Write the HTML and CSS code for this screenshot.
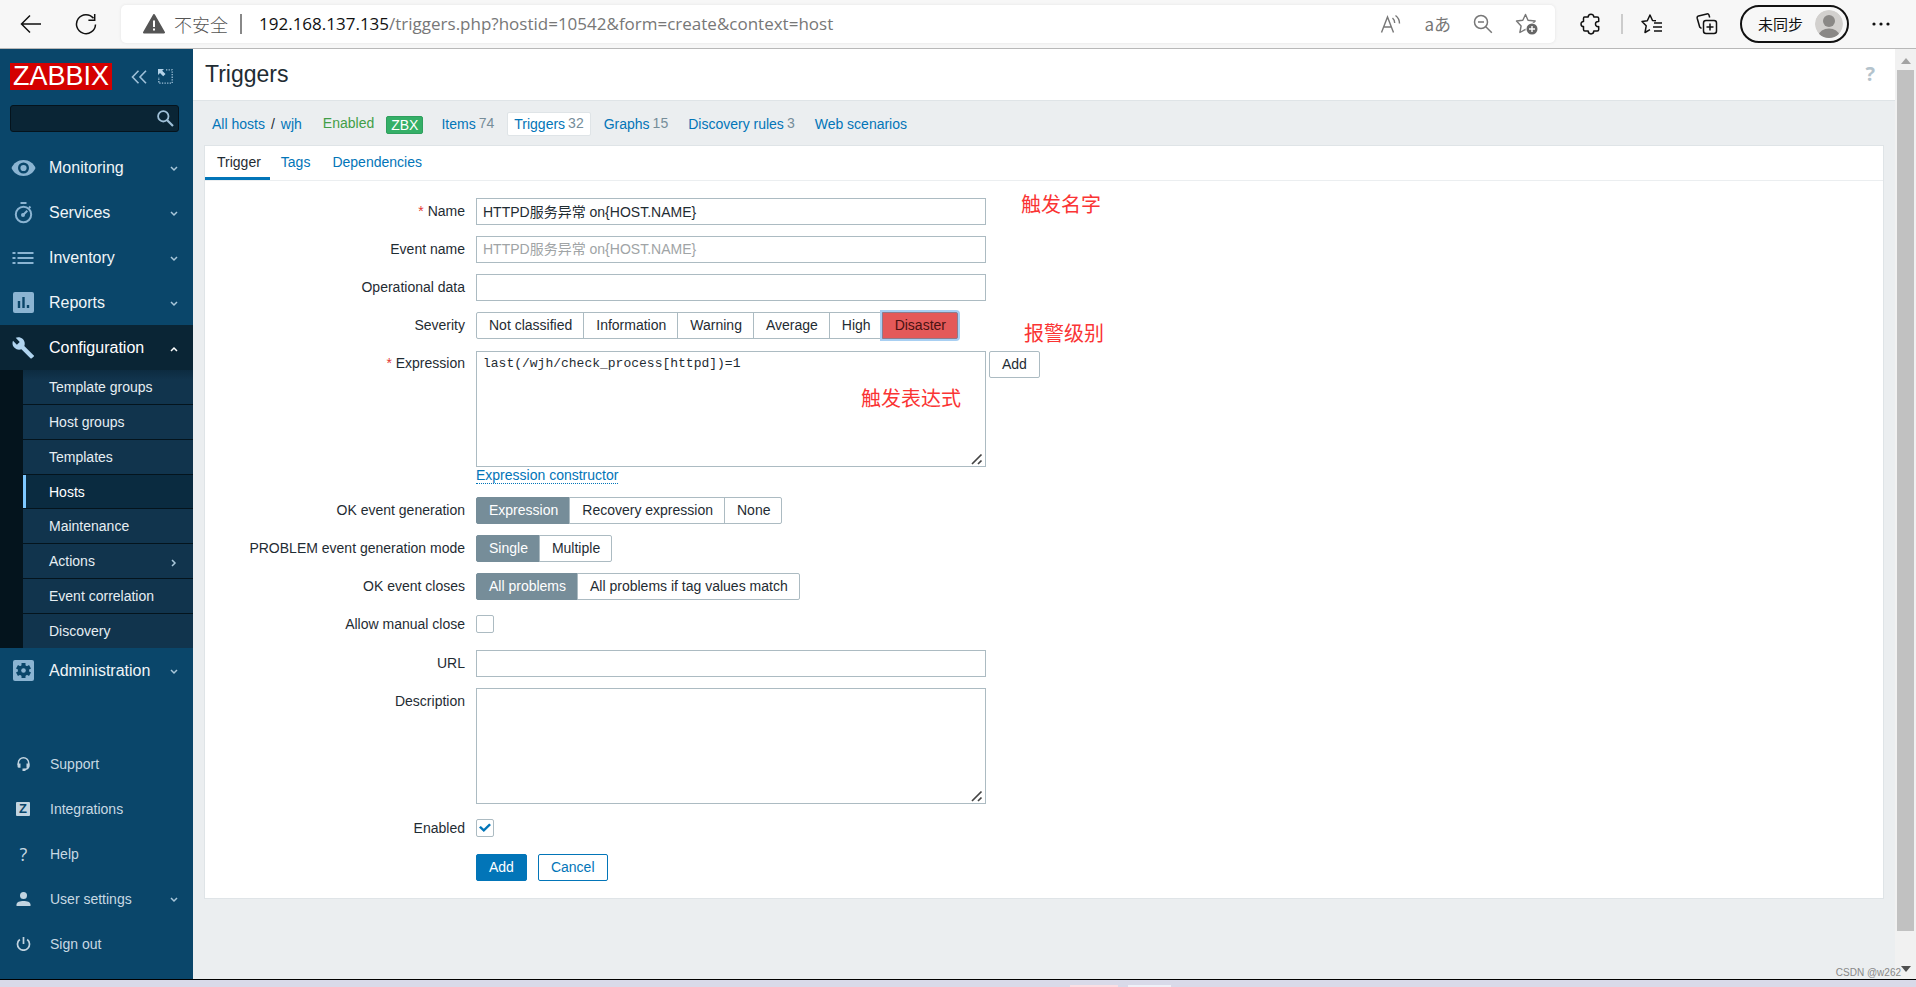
FILE: index.html
```
<!DOCTYPE html>
<html lang="en">
<head>
<meta charset="utf-8">
<title>Triggers</title>
<link rel="stylesheet" href="styles.css">
</head>
<body>
<header class="browser">
  <button class="tool" aria-label="Back"><svg width="22" height="20" viewBox="0 0 22 20"><path d="M21 10H2M10 1.500 1.500 10 10 18.500" fill="none" stroke="#111" stroke-width="1.500"/></svg></button>
  <button class="tool" aria-label="Reload"><svg width="22" height="22" viewBox="0 0 22 22"><path d="M20.500 11.500A9.500 9.500 0 1 1 18.500 5.300M19.700 1v6.300h-6.300" fill="none" stroke="#111" stroke-width="1.500"/></svg></button>
  <div class="address">
    <svg width="22" height="20" viewBox="0 0 22 20"><path d="M11 1 21 18.500H1z" fill="#555" stroke="#555" stroke-width="2" stroke-linejoin="round"/><path d="M11 6.500v6.500M11 14.500v2" stroke="#fff" stroke-width="2"/></svg>
    <span class="insecure">不安全</span>
    <span class="address-rule"></span>
    <span class="url"><b>192.168.137.135</b>/triggers.php?hostid=10542&amp;form=create&amp;context=host</span>
    <span class="address-icons">
      <button class="tool" aria-label="Read aloud"><svg width="22" height="20" viewBox="0 0 22 20" fill="none" stroke="#777" stroke-width="1.400"><path d="M1.500 18.500 7.500 3l6 15.500M3.600 13h7.800M12.500 4c1.500 1.300 2.200 3 2.200 5M15.500 1.500c2.700 2 4 4.500 4 8"/></svg></button>
      <button class="tool translate" aria-label="Translate">aあ</button>
      <button class="tool" aria-label="Zoom out"><svg width="20" height="20" viewBox="0 0 20 20" fill="none" stroke="#777" stroke-width="1.500"><circle cx="8" cy="8" r="6.500"/><path d="m12.800 12.800 6 6M5 8h6"/></svg></button>
      <button class="tool" aria-label="Add to favorites"><svg width="24" height="22" viewBox="0 0 24 22"><path d="M10.500 1.500 13 7.200l7.200.8-5.300 5 1 6.500-5.400-3.200-5.600 3.200 1.200-6.500L1.500 8l6.300-.8z" fill="none" stroke="#777" stroke-width="1.400" stroke-linejoin="round"/><circle cx="17" cy="16" r="6.500" fill="#fff"/><circle cx="17" cy="16" r="5.500" fill="#666"/><path d="M17 13v6M14 16h6" stroke="#fff" stroke-width="1.400"/></svg></button>
    </span>
  </div>
  <button class="tool puzzle" aria-label="Extensions"><svg width="22" height="22" viewBox="0 0 22 22"><path d="M4.500 4h3.700c0-3.700 5.600-3.700 5.600 0h3.400q1.500 0 1.500 1.500v3c-4.300-.700-4.300 5.800 0 5.100v3q0 1.500-1.500 1.500h-3.400c0 3.700-5.600 3.700-5.600 0H4.900q-1.400 0-1.400-1.500v-3c-3.300 0-3.300-5.200 0-5.200V5.500Q3.500 4 4.500 4z" fill="none" stroke="#111" stroke-width="1.500" stroke-linejoin="round"/></svg></button>
  <span class="tool-rule"></span>
  <button class="tool favorites" aria-label="Favorites"><svg width="22" height="20" viewBox="0 0 22 20" fill="none" stroke="#111" stroke-width="1.500" stroke-linejoin="round"><path d="M15 6.800 11.500 6.500 9 1 6.300 6.800 1 7.500l4.200 4.300L4 18.500l5-2.800"/><path d="M13 10h8M12 14h9M13 18h8" transform="translate(0 -1)"/></svg></button>
  <button class="tool collections" aria-label="Collections"><svg width="22" height="22" viewBox="0 0 22 22" fill="none" stroke="#111" stroke-width="1.500"><rect x="7.500" y="7.500" width="13" height="13" rx="2.500"/><path d="M14 10.500v7M10.500 14h7M5.500 15.500 3.700 14 1.200 5.200q-.400-1.800 1.300-2.300L10.800.900q1.700-.300 2.200 1.200l.7 2.400"/></svg></button>
  <button class="profile"><span>未同步</span><svg width="28" height="28" viewBox="0 0 28 28"><defs><clipPath id="face"><circle cx="14" cy="14" r="14"/></clipPath></defs><g clip-path="url(#face)"><circle cx="14" cy="14" r="14" fill="#d2d0ce"/><circle cx="14" cy="11" r="6" fill="#8a8886"/><ellipse cx="14" cy="25" rx="10" ry="6.500" fill="#8a8886"/></g></svg></button>
  <button class="tool more" aria-label="More"><svg width="18" height="4" viewBox="0 0 18 4" fill="#111"><circle cx="2" cy="2" r="1.600"/><circle cx="9" cy="2" r="1.600"/><circle cx="16" cy="2" r="1.600"/></svg></button>
</header>

<div class="page">
  <aside class="sidebar">
    <div class="brand">
      <a class="logo" href="#">ZABBIX</a>
      <button class="tool collapse" aria-label="Hide sidebar"><svg width="16" height="14" viewBox="0 0 16 14"><path d="M7.500.8 1.500 7l6 6.200M15 .8 9 7l6 6.200" fill="none" stroke="#9fc0d8" stroke-width="1.600"/></svg></button>
      <button class="tool" aria-label="Kiosk mode"><svg width="15" height="15" viewBox="0 0 15 15"><path d="M8 .8h6.200v13.400H.8V8" fill="none" stroke="#9fc0d8" stroke-width="1.300" stroke-dasharray="1.300 1.300"/><path d="M0 0h6L4.200 1.800 7.500 5 5.200 7.200 2 4 0 6z" fill="#b4d2e8"/></svg></button>
    </div>
    <form class="search">
      <input type="text" aria-label="Search">
      <button class="tool" type="button" aria-label="Search"><svg width="17" height="17" viewBox="0 0 17 17" fill="none" stroke="#9fc0d8"><circle cx="6.300" cy="6.300" r="5.200" stroke-width="1.800"/><path d="m10 10 6 6" stroke-width="2.200"/></svg></button>
    </form>
    <nav class="menu">
      <a class="item" href="#"><svg class="icon" width="24" height="18" viewBox="0 0 24 18"><path d="M12 1C6.500 1 2 4.200 0 9c2 4.800 6.500 8 12 8s10-3.200 12-8C22 4.200 17.500 1 12 1z" fill="#8bb4d2"/><circle cx="12" cy="9" r="4.300" fill="#8bb4d2" stroke="#0a466a" stroke-width="2.400"/></svg>Monitoring<svg class="chev" width="8" height="6" viewBox="0 0 8 6"><path d="m1 1 3 3 3-3"/></svg></a>
      <a class="item" href="#"><svg class="icon" width="20" height="22" viewBox="0 0 20 22"><circle cx="10" cy="12.500" r="7.700" fill="none" stroke="#8bb4d2" stroke-width="2"/><path d="M7 1h6M15.500 4.500l1.500 1.500" stroke="#8bb4d2" stroke-width="2"/><circle cx="9.500" cy="13" r="2" fill="#8bb4d2"/><path d="m9 13.500 4.800-4.800" stroke="#8bb4d2" stroke-width="2"/></svg>Services<svg class="chev" width="8" height="6" viewBox="0 0 8 6"><path d="m1 1 3 3 3-3"/></svg></a>
      <a class="item" href="#"><svg class="icon" width="22" height="14" viewBox="0 0 22 14"><path d="M0 2h3M0 7h3M0 12h3M5 2h16M5 7h16M5 12h16" stroke="#8bb4d2" stroke-width="2"/></svg>Inventory<svg class="chev" width="8" height="6" viewBox="0 0 8 6"><path d="m1 1 3 3 3-3"/></svg></a>
      <a class="item" href="#"><svg class="icon" width="21" height="21" viewBox="0 0 21 21"><rect width="21" height="21" rx="2" fill="#8bb4d2"/><path d="M6 9v7M10.500 5v11M15 13v3" stroke="#0a466a" stroke-width="2.400"/></svg>Reports<svg class="chev" width="8" height="6" viewBox="0 0 8 6"><path d="m1 1 3 3 3-3"/></svg></a>
      <a class="item open" href="#"><svg class="icon" width="22" height="22" viewBox="0 0 22 22"><path d="M21 18.200 11.800 9c.9-2.400.4-5-1.500-6.900C8.300.2 5.500-.3 3.200.8l4 4.100-2.800 2.900L.5 3.800c-1 2.200-.5 5 1.500 7 1.900 1.900 4.500 2.400 6.900 1.500l9 9c.4.400 1 .4 1.400 0l2-1.900c.4-.3.400-.9-.3-1.200z" fill="#b0d4ef"/></svg>Configuration<svg class="chev" width="8" height="6" viewBox="0 0 8 6"><path d="m1 5 3-3 3 3"/></svg></a>
      <div class="submenu">
        <a href="#">Template groups</a>
        <a href="#">Host groups</a>
        <a href="#">Templates</a>
        <a class="current" href="#">Hosts</a>
        <a href="#">Maintenance</a>
        <a href="#">Actions<svg class="chev" width="6" height="8" viewBox="0 0 6 8"><path d="m1 1 3 3-3 3"/></svg></a>
        <a href="#">Event correlation</a>
        <a href="#">Discovery</a>
      </div>
      <a class="item" href="#"><svg class="icon" width="21" height="21" viewBox="0 0 21 21"><rect width="21" height="21" rx="2" fill="#8bb4d2"/><circle cx="10.500" cy="10.500" r="5.600" fill="#0a466a"/><path d="M10.500 3v15M4 6.800l13 7.400M4 14.200l13-7.400" stroke="#0a466a" stroke-width="4"/><circle cx="10.500" cy="10.500" r="2.300" fill="#8bb4d2"/></svg>Administration<svg class="chev" width="8" height="6" viewBox="0 0 8 6"><path d="m1 1 3 3 3-3"/></svg></a>
    </nav>
    <nav class="menu user">
      <a class="item" href="#"><svg class="icon" width="14" height="14" viewBox="0 0 14 14"><path d="M1.800 8V6a5.200 5.200 0 0 1 10.400 0v2.500c0 2.500-1.500 3.800-4.200 4" fill="none" stroke="#c2d4e0" stroke-width="1.500"/><path d="M1 6.500h3v4.300H2.500Q1 10.800 1 9.300zM10 6.500h3v2.800q0 1.500-1.500 1.500H10zM6 11.500h3V14H6z" fill="#c2d4e0"/></svg>Support</a>
      <a class="item" href="#"><span class="icon zed">Z</span>Integrations</a>
      <a class="item" href="#"><span class="icon mark">?</span>Help</a>
      <a class="item" href="#"><svg class="icon" width="14" height="14" viewBox="0 0 14 14" fill="#c2d4e0"><circle cx="7" cy="3.500" r="3.500"/><path d="M0 14v-1.500C0 10 3.500 9 7 9s7 1 7 3.500V14z"/></svg>User settings<svg class="chev" width="8" height="6" viewBox="0 0 8 6"><path d="m1 1 3 3 3-3"/></svg></a>
      <a class="item" href="#"><svg class="icon" width="14" height="14" viewBox="0 0 14 14" fill="none" stroke="#c2d4e0" stroke-width="1.700"><path d="M3.300 2.500a6 6 0 1 0 7.400 0M7 0v7"/></svg>Sign out</a>
    </nav>
  </aside>

  <main class="main">
    <div class="title"><h1>Triggers</h1><a class="help" href="#" aria-label="Help">?</a></div>
    <div class="content">
      <nav class="crumbs">
        <a href="#">All hosts</a><span class="slash">/</span><a href="#">wjh</a>
        <span class="enabled">Enabled</span><span class="zbx">ZBX</span>
        <span class="link"><a href="#">Items</a><span class="count">74</span></span>
        <span class="link selected"><a href="#">Triggers</a><span class="count">32</span></span>
        <span class="link"><a href="#">Graphs</a><span class="count">15</span></span>
        <span class="link"><a href="#">Discovery rules</a><span class="count">3</span></span>
        <span class="link"><a href="#">Web scenarios</a></span>
      </nav>
      <section class="card">
        <nav class="tabs"><a class="active" href="#">Trigger</a><a href="#">Tags</a><a href="#">Dependencies</a></nav>
        <form class="form">
          <label class="label" for="name"><i>*</i> Name</label>
          <div><input class="text" id="name" type="text" value="HTTPD服务异常 on{HOST.NAME}"></div>
          <label class="label" for="event">Event name</label>
          <div><input class="text" id="event" type="text" placeholder="HTTPD服务异常 on{HOST.NAME}"></div>
          <label class="label" for="opdata">Operational data</label>
          <div><input class="text" id="opdata" type="text"></div>
          <span class="label">Severity</span>
          <div class="segments">
            <label><input type="radio" name="severity">Not classified</label>
            <label><input type="radio" name="severity">Information</label>
            <label><input type="radio" name="severity">Warning</label>
            <label><input type="radio" name="severity">Average</label>
            <label><input type="radio" name="severity">High</label>
            <label class="disaster"><input type="radio" name="severity" checked>Disaster</label>
          </div>
          <label class="label" for="expr"><i>*</i> Expression</label>
          <div class="expression">
            <div class="expression-row">
              <div class="area"><textarea class="text mono" id="expr">last(/wjh/check_process[httpd])=1</textarea><svg class="grip" width="12" height="12" viewBox="0 0 12 12"><path d="M1 11 10.500 1.500M7 11l3.500-3.500" stroke="#444" stroke-width="1.700"/></svg></div>
              <button class="btn plain" type="button">Add</button>
            </div>
            <a class="dotted" href="#">Expression constructor</a>
          </div>
          <span class="label">OK event generation</span>
          <div class="segments">
            <label><input type="radio" name="ok" checked>Expression</label>
            <label><input type="radio" name="ok">Recovery expression</label>
            <label><input type="radio" name="ok">None</label>
          </div>
          <span class="label">PROBLEM event generation mode</span>
          <div class="segments">
            <label><input type="radio" name="mode" checked>Single</label>
            <label><input type="radio" name="mode">Multiple</label>
          </div>
          <span class="label">OK event closes</span>
          <div class="segments">
            <label><input type="radio" name="closes" checked>All problems</label>
            <label><input type="radio" name="closes">All problems if tag values match</label>
          </div>
          <label class="label" for="manual">Allow manual close</label>
          <div class="tick"><input type="checkbox" id="manual"></div>
          <label class="label" for="url">URL</label>
          <div><input class="text" id="url" type="text"></div>
          <label class="label" for="desc">Description</label>
          <div class="area"><textarea class="text" id="desc"></textarea><svg class="grip" width="12" height="12" viewBox="0 0 12 12"><path d="M1 11 10.500 1.500M7 11l3.500-3.500" stroke="#444" stroke-width="1.700"/></svg></div>
          <label class="label" for="on">Enabled</label>
          <div class="tick"><input type="checkbox" id="on" checked></div>
          <div class="actions"><button class="btn primary" type="button">Add</button><button class="btn" type="button">Cancel</button></div>
        </form>
        <span class="note note-name">触发名字</span>
        <span class="note note-level">报警级别</span>
        <span class="note note-expr">触发表达式</span>
      </section>
    </div>
  </main>
  <div class="scroll">
    <svg width="10" height="6" viewBox="0 0 10 6"><path d="M0 6 5 0l5 6z" fill="#a3a3a3"/></svg>
    <span class="thumb"></span>
    <svg width="10" height="6" viewBox="0 0 10 6"><path d="m0 0 5 6 5-6z" fill="#505050"/></svg>
  </div>
  <span class="watermark">CSDN @w262</span>
</div>
<footer class="taskbar"><span class="pink"></span><span></span></footer>
</body>
</html>
```
FILE: styles.css
```
* { box-sizing: border-box; }
body {
  margin: 0;
  height: 100vh;
  display: flex;
  flex-direction: column;
  overflow: hidden;
  font: 14px/16px "Liberation Sans", "Noto Sans CJK SC", sans-serif;
  color: #1f2c33;
  background: #ebeef0;
}
a { color: #0275b8; text-decoration: none; }
button { font: inherit; color: inherit; cursor: pointer; }
svg { display: block; flex: none; }
.tool { border: 0; padding: 0; background: none; display: flex; align-items: center; justify-content: center; }

/* Browser bar */
.browser {
  height: 49px;
  flex: none;
  display: flex;
  align-items: center;
  padding: 0 26px 0 20px;
  background: #f7f7f7;
  border-bottom: 1px solid #b8b8b8;
}
.browser > .tool:nth-child(2) { margin-left: 33px; }
.address {
  flex: 1;
  height: 38px;
  margin-left: 24px;
  padding: 0 16px 0 22px;
  display: flex;
  align-items: center;
  background: #fff;
  border-radius: 5px;
  box-shadow: 0 0 3px #e2e2e2;
}
.insecure { margin-left: 9px; font: 300 18px/24px "Noto Sans CJK SC", sans-serif; color: #555; }
.address-rule { width: 2px; height: 20px; margin: 0 17px 0 12px; background: #888; }
.url { font: 17px/24px "Open Sans", sans-serif; color: #777; }
.url b { font-weight: 400; color: #111; }
.address-icons { margin-left: auto; display: flex; align-items: center; gap: 22px; }
.translate { font: 17px/20px "Noto Sans CJK JP", sans-serif; color: #777; }
.puzzle { margin-left: 25px; }
.tool-rule { width: 2px; height: 20px; margin: 0 18px 0 19px; background: #ccc; }
.collections { margin-left: 33px; }
.profile {
  width: 109px;
  height: 38px;
  margin-left: 22px;
  padding: 0 4px 0 16px;
  display: flex;
  align-items: center;
  justify-content: space-between;
  background: #f7f7f7;
  border: 2px solid #111;
  border-radius: 19px;
  font: 15px/20px "Noto Sans CJK SC", sans-serif;
  color: #111;
}
.more { margin-left: 23px; }

/* Frame */
.page { flex: 1; min-height: 0; display: flex; position: relative; }
.sidebar { width: 193px; flex: none; display: flex; flex-direction: column; background: #0a466a; }
.brand { display: flex; align-items: center; padding: 14px 0 0 10px; }
.logo { width: 102px; background: #d40000; color: #fff; font-size: 27px; line-height: 27px; text-align: center; }
.collapse { margin: 0 11px 0 19px; }
.search {
  display: flex;
  align-items: center;
  height: 27px;
  margin: 15px 14px 13px 10px;
  padding-right: 4px;
  background: #0a2535;
  border: 1px solid #05131c;
  border-radius: 3px;
}
.search input { flex: 1; min-width: 0; border: 0; background: none; color: #fff; }
.item {
  height: 45px;
  display: flex;
  align-items: center;
  padding-right: 15px;
  font-size: 16px;
  color: #f0f5f8;
}
.icon { display: block; width: 47px; margin-right: 2px; flex: none; }
.chev { margin-left: auto; margin-top: 3px; fill: none; stroke: #a9c7da; stroke-width: 1.500; }
.open { background: #0a2535; color: #fff; }
.open .chev { stroke: #fff; }
.submenu { padding-left: 23px; background: #04141d; }
.submenu a {
  height: 34px;
  display: flex;
  align-items: center;
  padding: 0 16px 0 26px;
  background: #11344d;
  color: #e6eef3;
}
.submenu a + a { margin-top: 1px; }
.submenu a:first-child { background: linear-gradient(#0c2b40, #11344d 10px); }
.submenu .current { height: 33px; padding-left: 23px; border-left: 3px solid #7ec8ff; background: #0a2b40; color: #fff; }
.user { margin-top: auto; padding-bottom: 13px; }
.user .item { font-size: 14px; color: #c8d9e3; }
.user .icon { margin-right: 3px; }
.user .zed {
  width: 14px;
  margin: 0 20px 0 16px;
  border-radius: 1px;
  background: #c2d4e0;
  color: #0a466a;
  font-weight: 700;
  font-size: 13px;
  line-height: 14px;
  text-align: center;
}
.mark { font: 18px/20px "Open Sans", sans-serif; text-align: center; }

/* Content */
.main { flex: 1; min-width: 0; }
.title {
  height: 52px;
  display: flex;
  align-items: center;
  justify-content: space-between;
  padding: 0 20px 2px 12px;
  background: #fff;
  border-bottom: 1px solid #dfe4e7;
}
h1 { margin: 0; font-size: 23px; line-height: 28px; font-weight: 400; }
.help { font: 700 20px/24px "Open Sans", sans-serif; color: #b4c3cc; }
.content { padding: 0 11px; }
.crumbs { height: 44px; display: flex; align-items: center; padding: 2px 0 0 8px; }
.slash { margin: 0 6px; }
.enabled { margin: 0 12px 2px 21px; color: #429e47; }
.zbx {
  margin: 2px 11px 0 0;
  padding: 0 4px;
  background: #34af67;
  border: 1px solid #2f9f5e;
  border-radius: 2px;
  color: #fff;
}
.link { display: flex; gap: 3px; margin-right: 6px; padding: 3px 6px; border: 1px solid transparent; }
.selected { background: #fff; border-color: #dfe4e7; border-radius: 2px; }
.count { margin-bottom: 1px; line-height: 15px; color: #768d99; }

.card { position: relative; background: #fff; border: 1px solid #dfe4e7; }
.tabs { display: flex; height: 35px; border-bottom: 1px solid #ebeef0; }
.tabs a { padding: 8px 11px 0; }
.tabs .active { padding: 8px 9px 0 12px; color: #1f2c33; border-bottom: 3px solid #0275b8; }
.form {
  display: grid;
  grid-template-columns: 260px 1fr;
  gap: 11px;
  padding: 17px 0 17px;
}
.label { text-align: right; padding-top: 5px; }
.label i { font-style: normal; color: #e33734; }
.text {
  display: block;
  width: 510px;
  height: 27px;
  margin: 0;
  padding: 0 6px 2px;
  border: 1px solid #acbbc2;
  background: #fff;
  font: 14px/16px "Liberation Sans", "Noto Sans CJK SC", sans-serif;
  color: #1f2c33;
  outline: 0;
}
.text::placeholder { color: #a0a4a6; opacity: 1; }
textarea.text { height: 116px; padding: 4px 6px; resize: none; }
.text.mono { font: 13px/16px "Liberation Mono", monospace; }
.area { position: relative; width: 510px; }
.grip { position: absolute; right: 3px; bottom: 2px; }
.expression { padding-top: 1px; }
.expression-row { display: flex; align-items: flex-start; gap: 3px; }
.dotted { display: inline-block; margin-bottom: 2px; border-bottom: 1px dotted #0275b8; }
.segments { display: flex; }
.segments label {
  height: 27px;
  padding: 4px 11px 0 12px;
  border: 1px solid #acbbc2;
  margin-left: -1px;
  line-height: 16px;
}
.segments label:first-child { margin-left: 0; border-radius: 2px 0 0 2px; }
.segments label:last-child { border-radius: 0 2px 2px 0; }
.segments input { position: absolute; opacity: 0; width: 1px; height: 1px; margin: 0; }
.segments label:has(:checked) { background: #768d99; border-color: #768d99; color: #fff; }
.segments .disaster:has(:checked) { background: #e45959; border-color: #8c7b8d; color: #4a1212; box-shadow: 0 0 0 2px #a8cff2; }
.tick { height: 28px; padding-top: 4px; }
.tick input {
  appearance: none;
  display: block;
  width: 18px;
  height: 18px;
  margin: 0;
  border: 1px solid #acbbc2;
  border-radius: 2px;
  background: #fff;
}
.tick input:checked::before {
  content: "";
  display: block;
  width: 12px;
  height: 10px;
  margin: 3px 2px;
  background: #0275b8;
  clip-path: polygon(0 45%, 15% 30%, 40% 58%, 85% 5%, 100% 20%, 40% 90%);
}
.actions { grid-column: 2; display: flex; gap: 11px; }
.btn {
  height: 27px;
  padding: 0 12px 2px;
  border: 1px solid #0275b8;
  border-radius: 2px;
  background: #fff;
  color: #0275b8;
}
.primary { background: #0275b8; color: #fff; }
.plain { border-color: #acbbc2; color: #1f2c33; }

/* Annotations drawn over the form */
.note { position: absolute; font: 20px/24px "Noto Sans CJK SC", sans-serif; color: #fa3434; }
.note-name { left: 816px; top: 46px; }
.note-level { left: 819px; top: 175px; }
.note-expr { left: 656px; top: 240px; }

.scroll {
  width: 21px;
  flex: none;
  display: flex;
  flex-direction: column;
  align-items: center;
  gap: 6px;
  padding: 9px 0 7px;
  background: #f1f1f1;
}
.thumb { flex: 1; width: 17px; margin-bottom: 29px; background: #c1c1c1; }
.watermark { position: absolute; right: 15px; bottom: 0; font-size: 10px; line-height: 12px; color: #888; }
.taskbar { height: 8px; flex: none; display: flex; align-items: flex-end; gap: 10px; padding-left: 1070px; border-top: 1px solid #000; background: #d9dae9; }
.taskbar span { width: 43px; height: 2px; background: #f0f1f8; }
.taskbar .pink { width: 48px; background: #fbdfe4; }
```
